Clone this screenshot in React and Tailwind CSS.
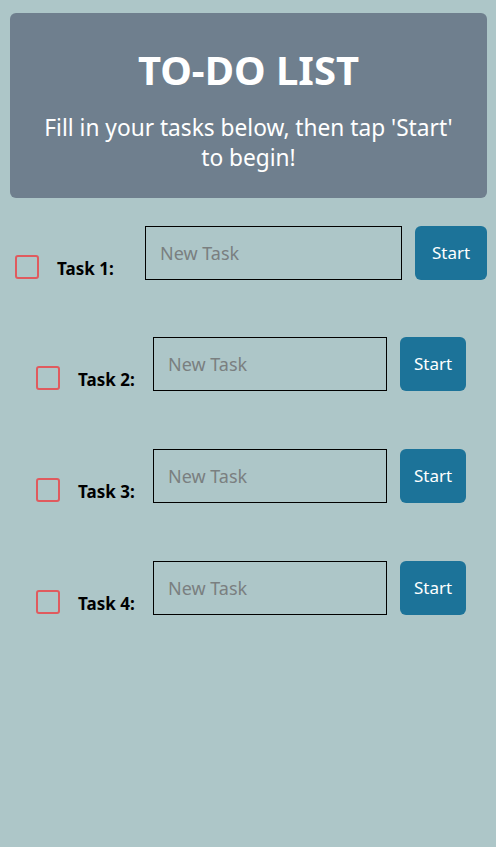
export default function App() {
  const font = { fontFamily: '"Noto Sans", "Open Sans", sans-serif' };
  const Row = ({ n, wide, mt }) => (
    <div className={`flex items-end ${mt} ${wide ? "pl-[15px]" : "pl-[36px]"}`}>
      <div className="w-[24px] h-[24px] border-2 border-[#e05a5e] rounded-[3px] mb-[1px] shrink-0" />
      <span className={`${wide ? "w-[88px]" : "w-[75px]"} ml-[18px] text-[17px] font-bold text-black leading-[20px] mb-[1px] whitespace-nowrap`}>
        Task {n}:
      </span>
      <div className={`${wide ? "w-[257px]" : "w-[234px]"} h-[54px] border border-black flex items-center px-[14px] text-[18px] text-[#7a7f80] shrink-0`}>
        New Task
      </div>
      <div className={`${wide ? "w-[72px]" : "w-[66px]"} ml-[13px] h-[54px] rounded-[6px] bg-[#1c7399] text-white text-[17px] flex items-center justify-center shrink-0`}>
        Start
      </div>
    </div>
  );
  return (
    <div className="w-[496px] h-[847px] bg-[#adc6c8] pt-[13px]" style={font}>
      <div className="mx-[10px] w-[477px] h-[185px] bg-[#6f7f8e] rounded-[6px] flex flex-col items-center text-white text-center pt-[32px]">
        <div className="text-[40px] font-bold leading-[50px]">TO-DO LIST</div>
        <div className="text-[22.7px] leading-[30px] mt-[18px] whitespace-nowrap">
          Fill in your tasks below, then tap 'Start'
          <br />
          to begin!
        </div>
      </div>
      <Row n={1} wide mt="mt-[28px]" />
      <Row n={2} mt="mt-[57px]" />
      <Row n={3} mt="mt-[58px]" />
      <Row n={4} mt="mt-[58px]" />
    </div>
  );
}
